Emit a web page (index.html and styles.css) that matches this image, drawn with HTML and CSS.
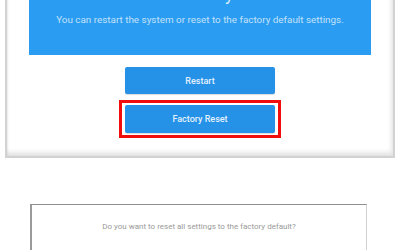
FILE: index.html
```html
<!DOCTYPE html>
<html>
  <head>
    <title>Factory Reset</title>
    <meta charset="utf-8" />
    <link rel="stylesheet" href="styles.css">
  </head>
  <body>
    <div class="frame">
      <div class="banner">
        <div class="banner-title">Recovery</div>
        <div class="banner-text">You can restart the system or reset to the factory default settings.</div>
      </div>
      <div class="actions">
        <button class="btn" id="restartBtn">Restart</button>
        <div class="highlight">
          <button class="btn" id="resetBtn">Factory Reset</button>
        </div>
      </div>
    </div>

    <div class="dialog">
      <p class="dialog-message">Do you want to reset all settings to the factory default?</p>
    </div>
  </body>
</html>
```

FILE: styles.css
```css
body {
  margin: 0;
  padding: 0;
  background: #ffffff;
  font-family: Roboto, "Liberation Sans", Arial, sans-serif;
  width: 400px;
  height: 250px;
  overflow: hidden;
}

/* screenshot frame, top is cut off */
.frame {
  width: 390px;
  margin: -45px 0 0 5px;
  padding: 10px 22px 18px;
  box-sizing: border-box;
  border: 2px solid #d2d2d2;
  box-shadow: inset -2px -4px 4px rgba(0, 0, 0, 0.1), inset 1px 0 2px rgba(0, 0, 0, 0.08);
}
.banner {
  background: #2a9cf1;
  padding: 16px 10px 28px;
  text-align: center;
}
.banner-title {
  font-size: 18px;
  line-height: 22px;
  padding-right: 6px;
  color: #d8ecfc;
}
.banner-text {
  margin-top: 8px;
  font-size: 9.9px;
  line-height: 14px;
  color: #c4e1fa;
}

.actions {
  display: flex;
  flex-direction: column;
  align-items: center;
  margin-top: 12px;
}
.btn {
  width: 150px;
  border: none;
  border-radius: 2px;
  background: #2592e8;
  color: #e4f1fc;
  font-family: Roboto, "Liberation Sans", Arial, sans-serif;
  font-size: 9px;
  font-weight: 500;
  box-shadow: 0 1px 1px rgba(0, 0, 0, 0.15);
  padding: 0;
}
#restartBtn {
  height: 27px;
}
#resetBtn {
  height: 28px;
}
.highlight {
  margin-top: 6px;
  border: 3px solid #f20d0d;
  padding: 2px 3px;
  display: flex;
}

.dialog {
  width: 337px;
  height: 47px;
  margin: 46px 0 0 30px;
  box-sizing: border-box;
  border-top: 1px solid #8e8e8e;
  border-left: 2px solid #9a9a9a;
  border-right: 1px solid #d0d0d0;
}
.dialog-message {
  margin: 0;
  padding-top: 16px;
  text-align: center;
  font-size: 8px;
  line-height: 12px;
  color: #9a9a9a;
}
```
